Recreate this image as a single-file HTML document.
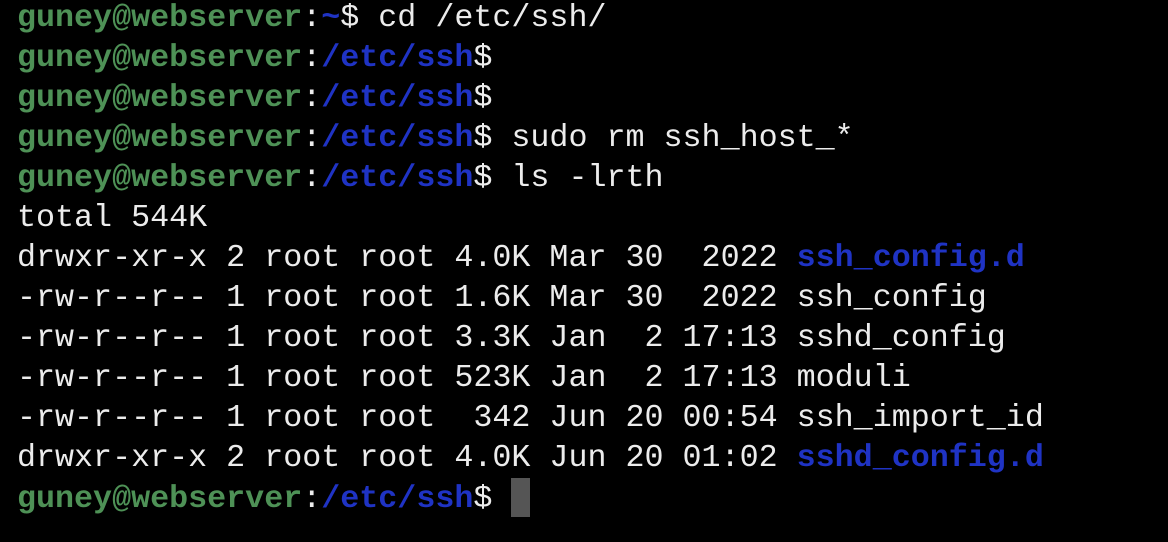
<!DOCTYPE html>
<html><head><style>
html,body{margin:0;padding:0;background:#000;width:1168px;height:542px;overflow:hidden}
pre{margin:0;position:absolute;left:17px;top:-2px;font-family:"Liberation Mono",monospace;font-size:31.7px;line-height:40px;color:#ececec}
.g{color:#4e9156;font-weight:bold}
.b{color:#1f33c4;font-weight:bold}
.c{display:inline-block;width:19px;height:39px;background:#555;vertical-align:-10px}
</style></head><body>
<pre><span class="g">guney@webserver</span>:<span class="b">~</span>$ cd /etc/ssh/
<span class="g">guney@webserver</span>:<span class="b">/etc/ssh</span>$
<span class="g">guney@webserver</span>:<span class="b">/etc/ssh</span>$
<span class="g">guney@webserver</span>:<span class="b">/etc/ssh</span>$ sudo rm ssh_host_*
<span class="g">guney@webserver</span>:<span class="b">/etc/ssh</span>$ ls -lrth
total 544K
drwxr-xr-x 2 root root 4.0K Mar 30  2022 <span class="b">ssh_config.d</span>
-rw-r--r-- 1 root root 1.6K Mar 30  2022 ssh_config
-rw-r--r-- 1 root root 3.3K Jan  2 17:13 sshd_config
-rw-r--r-- 1 root root 523K Jan  2 17:13 moduli
-rw-r--r-- 1 root root  342 Jun 20 00:54 ssh_import_id
drwxr-xr-x 2 root root 4.0K Jun 20 01:02 <span class="b">sshd_config.d</span>
<span class="g">guney@webserver</span>:<span class="b">/etc/ssh</span>$ <span class="c"></span></pre>
</body></html>
